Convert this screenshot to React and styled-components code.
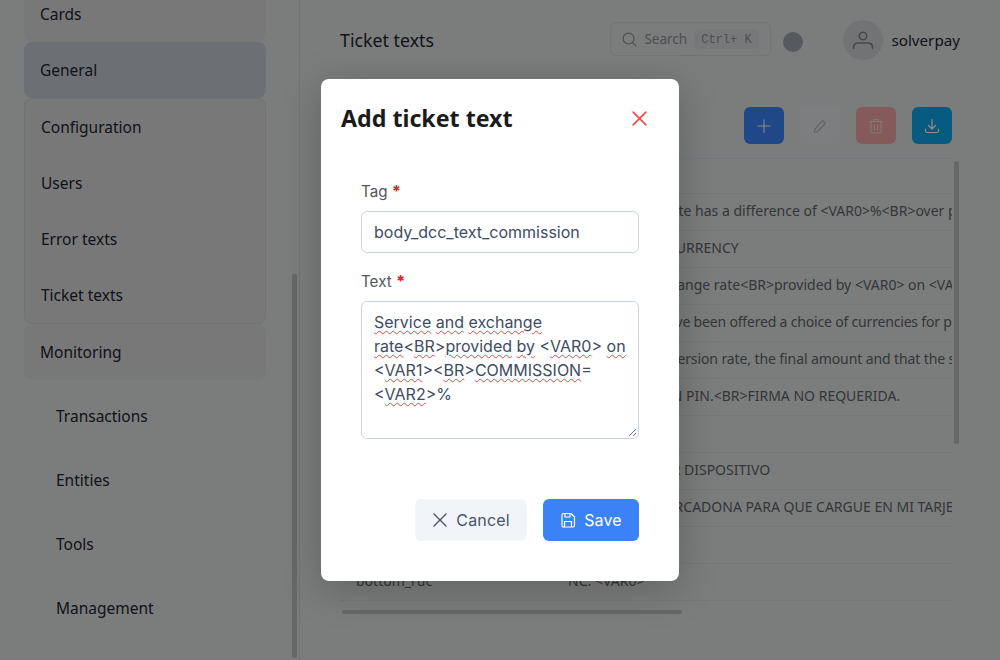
import React from "react";
import styled, { createGlobalStyle } from "styled-components";

const UI = `"Noto Sans", "Open Sans", sans-serif`;
const Global = createGlobalStyle`
  html, body { margin: 0; padding: 0; width: 100%; height: 100%; overflow: hidden; }
  body { background: #e0e3e2; font-family: ${UI}; color: #1f2430; }
  * { box-sizing: border-box; }
`;
const Page = styled.div`
  display: flex; width: 1000px; height: 660px; overflow: hidden; position: relative;
`;
const Sidebar = styled.aside`
  position: relative; flex: 0 0 300px; height: 660px; overflow: hidden;
  border-right: 1px solid #cfd2d1; padding: 0 33px 0 24px;
`;
const SideScroll = styled.div`
  position: absolute; left: 292px; top: 274px; width: 5px; height: 384px;
  background: #bcbcbc; border-radius: 3px;
`;
const NavGroup = styled.div`
  margin-top: -14px;
`;
const NavTop = styled.div`
  height: 56px; padding: 0 0 1px 16px; display: flex; align-items: center;
  font-size: 15.5px; border-radius: 8px;
  background: ${p => (p.$active ? "#c5ccd6" : "#dadada")};
`;
const Sub = styled.div`
  border: 1px solid #cfcfcf; border-radius: 8px; background: #dadada;
`;
const SubItem = styled.div`
  height: 56px; padding: 0 0 1px 16px; display: flex; align-items: center; font-size: 15.5px;
`;
const LeafList = styled.div`
  padding-top: 4px;
`;
const Leaf = styled.div`
  height: 64px; padding: 0 0 1px 32px; display: flex; align-items: center; font-size: 15.5px;
`;
const Main = styled.main`
  flex: 1; min-width: 0; padding: 0 48px 0 40px;
`;
const Header = styled.header`
  height: 80px; margin-right: -8px; display: flex; align-items: center;
`;
const Title = styled.h1`
  margin: 0; flex: 1; font-size: 17.8px; font-weight: 400;
`;
const Search = styled.div`
  width: 161px; height: 34px; border: 1px solid #d0d3d6; border-radius: 6px;
  display: flex; align-items: center; padding-left: 11px; color: #8a9099; font-size: 13.5px;
  margin-top: -2px; gap: 7px;
`;
const Kbd = styled.span`
  margin-left: 0; padding: 2px 7px 0; height: 20px; display: inline-flex; align-items: center;
  border-radius: 4px; background: #d8dadd; font: 12px "Liberation Mono", monospace; color: #8a9099;
`;
const Dot = styled.div`
  width: 20px; height: 20px; border-radius: 50%; background: #9fa3b0; margin: 4px 0 0 12px;
`;
const Avatar = styled.div`
  width: 40px; height: 40px; border-radius: 50%; background: #cfd2d6; margin-left: 40px;
  display: flex; align-items: center; justify-content: center; color: #7d838c;
`;
const User = styled.span`
  margin-left: 8px; font-size: 15.2px;
`;
const Toolbar = styled.div`
  display: flex; justify-content: flex-end; gap: 16px; padding-top: 27px; height: 78px;
`;
const Tool = styled.div`
  width: 40px; height: 37px; border-radius: 6px; display: flex; align-items: center;
  justify-content: center; color: ${p => p.$fg}; background: ${p => p.$bg};
`;
const TableWrap = styled.div`
  position: relative; height: 461px; border-top: 1px solid #d5dde8;
`;
const Row = styled.div`
  height: ${p => (p.$head ? "35px" : "37px")}; border-bottom: 1px solid #d5d9dc; display: flex; align-items: center;
  padding-bottom: 3px; font-size: 14px; color: #606468; white-space: nowrap; overflow: hidden; width: 612px;
`;
const Cell = styled.div`
  flex: 0 0 228px; padding-left: 16px;
`;
const Value = styled.div`
  flex: 1; min-width: 0; overflow: hidden; letter-spacing: ${p => p.$ls || 0}px;
`;
const VScroll = styled.div`
  position: absolute; left: 614px; top: 2px; width: 5px; height: 283px; background: #bcbcbc; border-radius: 3px;
`;
const HScroll = styled.div`
  position: absolute; left: 2px; top: 451px; width: 340px; height: 4px; background: #bcbcbc; border-radius: 2px;
`;
const Overlay = styled.div`
  position: absolute; inset: 0; background: rgba(0,0,0,.45);
`;
const Modal = styled.div`
  position: absolute; left: 321px; top: 79px; width: 358px; height: 502px;
  background: #fff; border-radius: 8px; box-shadow: 0 8px 40px rgba(0,0,0,.22);
  padding: 0 20px; display: flex; flex-direction: column;
`;
const ModalHead = styled.div`
  height: 78px; display: flex; align-items: center; justify-content: space-between; padding-bottom: 1px;
`;
const ModalTitle = styled.h2`
  margin: 0; font-size: 23.2px; font-weight: 700; color: #1b1b1b;
`;
const CloseBtn = styled.span`
  display: flex; margin: 2px 11px 0 0; color: #ef4444;
`;
const Form = styled.div`
  padding: 24px 20px 0;
`;
const Label = styled.label`
  display: block; height: 20px; font: 15.2px/22px Inter, sans-serif; color: #52565c; margin-bottom: 10px;
`;
const Star = styled.span`
  color: #dc2626; font-weight: 800; font-size: 16px; line-height: 16px;
`;
const Field = styled.div`
  height: 42px; border: 1px solid #cbd5e1; border-radius: 6px; padding: 0 12px; display: flex;
  align-items: center; font: 16px Inter, sans-serif; color: #3e4c63; margin-bottom: 18px;
`;
const Area = styled.div`
  position: relative; height: 138px; border: 1px solid #cbd5e1; border-radius: 6px; padding: 8px 12px;
  font: 16px/24px Inter, sans-serif; color: #3e4c63;
`;
const Sq = styled.span`
  text-decoration: underline wavy #ef4444 1px; text-underline-offset: 2px;
`;
const Grip = styled.svg`
  position: absolute; right: 1px; bottom: 1px;
`;
const Footer = styled.div`
  display: flex; justify-content: flex-end; gap: 16px; margin-top: 60px; padding-right: 20px;
`;
const Btn = styled.div`
  height: 42px; width: ${p => p.$w}px; border-radius: 6px; display: flex; align-items: center; justify-content: center;
  gap: 8px; font: 400 16px Inter, sans-serif; letter-spacing: .15px; background: ${p => p.$bg}; color: ${p => p.$fg};
`;

const Svg = ({ s = 16, sw = 1.2, children }) => (
  <svg width={s} height={s} viewBox="0 0 16 16" fill="none" stroke="currentColor" strokeWidth={sw} strokeLinecap="round" strokeLinejoin="round">{children}</svg>
);
const X = ({ s, sw }) => <Svg s={s} sw={sw}><path d="M2 2l12 12M14 2L2 14" /></Svg>;

const rows = [
  ["", "", 0],
  ["", "This exchange rate has a difference of <VAR0>%<BR>over published rate", 0],
  ["", "TRANSACTION CURRENCY", 0],
  ["", "Service and exchange rate<BR>provided by <VAR0> on <VAR1>", 0],
  ["", "Note that you have been offered a choice of currencies for payment", -0.18],
  ["", "I accept the conversion rate, the final amount and that the selected", -0.1],
  ["", "VERIFICADO CON PIN.<BR>FIRMA NO REQUERIDA.", 0],
  ["", "", 0],
  ["", "VERIFICADO POR DISPOSITIVO", 0],
  ["", "AUTORIZO A MERCADONA PARA QUE CARGUE EN MI TARJETA", 0],
  ["", "", 0],
  ["bottom_ruc", "NC. <VAR0>", 0],
];

export default function App() {
  return (
    <Page>
      <Global />
      <Sidebar>
        <NavGroup>
          <NavTop>Cards</NavTop>
          <NavTop $active>General</NavTop>
          <Sub>
            <SubItem>Configuration</SubItem>
            <SubItem>Users</SubItem>
            <SubItem>Error texts</SubItem>
            <SubItem>Ticket texts</SubItem>
          </Sub>
          <NavTop>Monitoring</NavTop>
          <LeafList>
            <Leaf>Transactions</Leaf>
            <Leaf>Entities</Leaf>
            <Leaf>Tools</Leaf>
            <Leaf>Management</Leaf>
          </LeafList>
        </NavGroup>
        <SideScroll />
      </Sidebar>
      <Main>
        <Header>
          <Title>Ticket texts</Title>
          <Search>
            <Svg s={15} sw={1.2}><circle cx="7" cy="7" r="5.8" /><path d="M11.2 11.2L15 15" /></Svg>
            Search<Kbd>Ctrl+ K</Kbd>
          </Search>
          <Dot />
          <Avatar>
            <svg width="22" height="22" viewBox="0 0 22 22" fill="none" stroke="currentColor" strokeWidth="1.5" strokeLinecap="round"><circle cx="11" cy="7" r="3.7" /><path d="M1.5 19.5v-1.2c0-2.6 2-4.3 4.6-4.3h9.8c2.6 0 4.6 1.7 4.6 4.3v1.2" /></svg>
          </Avatar>
          <User>solverpay</User>
        </Header>
        <Toolbar>
          <Tool $bg="#3b82f6" $fg="#fff"><Svg s={14} sw={1.2}><path d="M8 1v14M1 8h14" /></Svg></Tool>
          <Tool $bg="#e3e6ea" $fg="#b0b4ba"><Svg s={16} sw={1.1}><path d="M10.5 2.5l3 3-7.6 7.6c-.9.9-2.3 1.3-3.6 1.1-.2-1.3.2-2.7 1.1-3.6z" /></Svg></Tool>
          <Tool $bg="#f0a5a5" $fg="#f8d8d8"><Svg s={16} sw={1.1}><path d="M2 3.5h12M5.5 3.5v-1a1 1 0 011-1h3a1 1 0 011 1v1M3 3.5v10a1.5 1.5 0 001.5 1.5h7a1.5 1.5 0 001.5-1.5v-10M6.5 7v5M9.5 7v5" /></Svg></Tool>
          <Tool $bg="#0ea5e9" $fg="#fff"><Svg s={16} sw={1.2}><path d="M8 1.5v9M4.5 7.5L8 11l3.5-3.5M1.5 11v2a1.5 1.5 0 001.5 1.5h10a1.5 1.5 0 001.5-1.5v-2" /></Svg></Tool>
        </Toolbar>
        <TableWrap>
          {rows.map((r, i) => (
            <Row key={i} $head={i === 0}>
              <Cell>{r[0]}</Cell>
              <Value $ls={r[2]}>{r[1]}</Value>
            </Row>
          ))}
          <VScroll />
          <HScroll />
        </TableWrap>
      </Main>
      <Overlay />
      <Modal>
        <ModalHead>
          <ModalTitle>Add ticket text</ModalTitle>
          <CloseBtn><X s={17} sw={1.4} /></CloseBtn>
        </ModalHead>
        <Form>
          <Label>Tag <Star>*</Star></Label>
          <Field>body_dcc_text_commission</Field>
          <Label>Text <Star>*</Star></Label>
          <Area>
            <Sq>Service</Sq> <Sq>and</Sq> <Sq>exchange</Sq><br />
            <Sq>rate</Sq>&lt;<Sq>BR</Sq>&gt;<Sq>provided</Sq> <Sq>by</Sq> &lt;<Sq>VAR0</Sq>&gt; <Sq>on</Sq><br />
            &lt;<Sq>VAR1</Sq>&gt;&lt;<Sq>BR</Sq>&gt;<Sq>COMMISSION</Sq>=<br />
            &lt;<Sq>VAR2</Sq>&gt;%
            <Grip width="10" height="10" viewBox="0 0 10 10" stroke="#64748b" strokeWidth="1"><path d="M2 9L9 2M6 9l3-3" /></Grip>
          </Area>
        </Form>
        <Footer>
          <Btn $w={112} $bg="#f1f5f9" $fg="#475569"><X s={16} sw={1.4} />Cancel</Btn>
          <Btn $w={96} $bg="#3b82f6" $fg="#fff">
            <Svg s={16} sw={1.2}><path d="M2 3a1.5 1.5 0 011.5-1.5h7.5l3.5 3.5v8.5a1.5 1.5 0 01-1.5 1.5h-9A1.5 1.5 0 012 13.5zM5 1.5v3.5h5V1.5M4.5 14.5V9.5h7v5" /></Svg>
            Save
          </Btn>
        </Footer>
      </Modal>
    </Page>
  );
}
